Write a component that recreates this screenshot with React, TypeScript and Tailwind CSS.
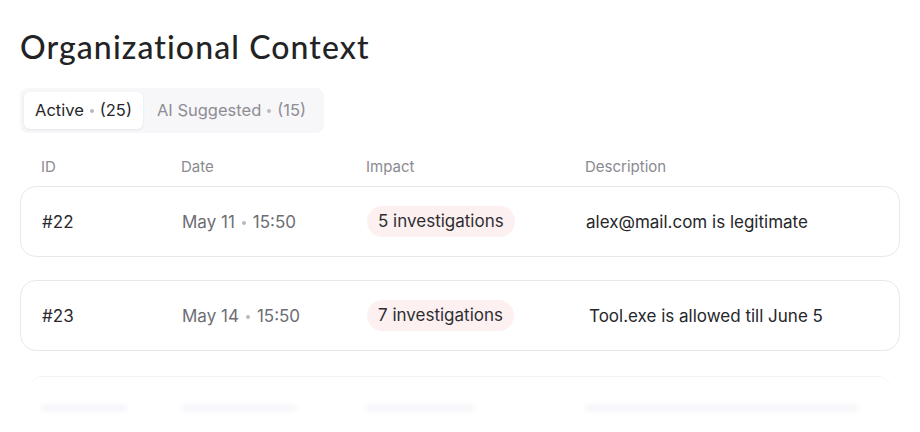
import React from "react";

type Row = {
  id: string;
  day: string;
  time: string;
  impact: string;
  description: string;
  descPad?: string;
};

const rows: Row[] = [
  { id: "#22", day: "May 11", time: "15:50", impact: "5 investigations", description: "alex@mail.com is legitimate" },
  { id: "#23", day: "May 14", time: "15:50", impact: "7 investigations", description: "Tool.exe is allowed till June 5", descPad: "pl-[3px]" },
];

function Dot({ className = "" }: { className?: string }) {
  return <span className={`inline-block w-[4px] h-[4px] rounded-full bg-[#b9b9c0] ${className}`} />;
}

export default function App() {
  return (
    <div
      className="w-[920px] h-[432px] overflow-hidden bg-white px-5 pt-[28px]"
      style={{ fontFamily: "Inter, 'Noto Sans', sans-serif" }}
    >
      {/* Title */}
      <h1
        className="text-[32px] leading-[38px] font-medium text-[#232326] tracking-[1.1px]"
        style={{ fontFamily: "Lato, 'Noto Sans', sans-serif" }}
      >
        Organizational Context
      </h1>

      {/* Tabs */}
      <div className="mt-[22px] inline-flex items-center rounded-lg bg-[#f7f6f9] p-1">
        <button className="flex items-center gap-[6px] h-[37px] px-[11px] rounded-md bg-white shadow-[0_1px_3px_rgba(20,20,40,0.08)] text-[16.5px] text-[#26262a]">
          Active <Dot /> (25)
        </button>
        <button className="flex items-center gap-[6px] h-[37px] px-[14px] text-[16.5px] text-[#8d8d94]">
          AI Suggested <Dot /> (15)
        </button>
      </div>

      {/* Header */}
      <div className="mt-[23px] grid grid-cols-[140px_185px_219px_1fr] pl-[21px] text-[15px] text-[#8a8a90]">
        <div>ID</div>
        <div>Date</div>
        <div>Impact</div>
        <div>Description</div>
      </div>

      {/* Rows */}
      <div className="mt-[7px] flex flex-col gap-[23px]">
        {rows.map((r) => (
          <div
            key={r.id}
            className="grid grid-cols-[140px_185px_219px_1fr] items-center h-[71px] pl-[21px] rounded-2xl border border-[#e8e8ec] text-[17px]"
          >
            <div className="mt-[4px] text-[#2a2a2e]">{r.id}</div>
            <div className="mt-[4px] flex items-center gap-[7px] text-[#6d6d73]">
              {r.day} <Dot /> {r.time}
            </div>
            <div className="mt-[1px]">
              <span className="inline-flex items-center h-[31px] px-[11px] rounded-full bg-[#fdf0f1] text-[#2e2e32]">
                {r.impact}
              </span>
            </div>
            <div className={`mt-[4px] text-[#26262a] ${r.descPad ?? ""}`}>{r.description}</div>
          </div>
        ))}

        {/* Faded placeholder row */}
        <div className="grid grid-cols-[140px_185px_219px_1fr] items-center h-[71px] pl-[12px] mt-[2px] mx-[8px] rounded-2xl border-t border-[#f2f2f5] pb-[8px]">
          <div className="h-[8px] w-[88px] rounded-full bg-[#f9f6fb] blur-[2px]" />
          <div className="h-[8px] w-[117px] rounded-full bg-[#f9f6fb] blur-[2px]" />
          <div className="h-[8px] w-[110px] rounded-full bg-[#f9f6fb] blur-[2px]" />
          <div className="h-[8px] w-[275px] rounded-full bg-[#f9f6fb] blur-[2px]" />
        </div>
      </div>
    </div>
  );
}
